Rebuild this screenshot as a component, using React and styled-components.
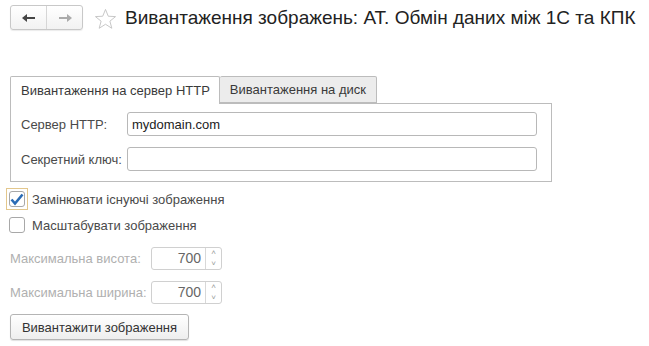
import React from 'react'
import styled, { createGlobalStyle } from 'styled-components'

const GlobalStyle = createGlobalStyle`
  body {
    margin: 0;
    background: #fff;
    font-family: Arial, "Liberation Sans", sans-serif;
  }
`

function App() {
  return (
    <Page>
      <GlobalStyle />
      <Header>
        <NavGroup>
          <NavButton>
            <svg width="14" height="10" viewBox="0 0 14 10">
              <path d="M0 5 L5 1 L5 4 L13 4 L13 6 L5 6 L5 9 Z" fill="#444" />
            </svg>
          </NavButton>
          <NavButton>
            <svg width="14" height="10" viewBox="0 0 14 10">
              <path d="M14 5 L9 1 L9 4 L1 4 L1 6 L9 6 L9 9 Z" fill="#aaa" />
            </svg>
          </NavButton>
        </NavGroup>
        <Star>
          <svg width="23" height="22" viewBox="0 0 24 23">
            <path
              d="M12 1.5 L14.9 8.6 L22.5 9 L16.6 13.8 L18.6 21.2 L12 17 L5.4 21.2 L7.4 13.8 L1.5 9 L9.1 8.6 Z"
              fill="none"
              stroke="#c4c4c4"
              strokeWidth="1"
              strokeLinejoin="round"
            />
          </svg>
        </Star>
        <Title>Вивантаження зображень: АТ. Обмін даних між 1С та КПК</Title>
      </Header>

      <Tabs>
        <TabBar>
          <Tab active>Вивантаження на сервер HTTP</Tab>
          <Tab>Вивантаження на диск</Tab>
        </TabBar>
        <TabPanel>
          <FieldRow>
            <FieldLabel>Сервер HTTP:</FieldLabel>
            <TextInput defaultValue="mydomain.com" />
          </FieldRow>
          <FieldRow>
            <FieldLabel>Секретний ключ:</FieldLabel>
            <TextInput defaultValue="" />
          </FieldRow>
        </TabPanel>
      </Tabs>

      <Options>
        <CheckRow>
          <CheckFrame focused>
            <CheckBox>
              <svg width="14" height="13" viewBox="0 0 14 13">
                <path d="M1.5 6.5 L5 10.5 L12.5 1.5" fill="none" stroke="#2b6cb5" strokeWidth="2.6" />
              </svg>
            </CheckBox>
          </CheckFrame>
          <CheckLabel>Замінювати існуючі зображення</CheckLabel>
        </CheckRow>
        <CheckRow>
          <CheckFrame>
            <CheckBox />
          </CheckFrame>
          <CheckLabel>Масштабувати зображення</CheckLabel>
        </CheckRow>

        <SpinRow>
          <SpinLabel>Максимальна висота:</SpinLabel>
          <SpinBox>
            <SpinValue>700</SpinValue>
            <SpinArrows>
              <Arrow>˄</Arrow>
              <Arrow>˅</Arrow>
            </SpinArrows>
          </SpinBox>
        </SpinRow>
        <SpinRow>
          <SpinLabel>Максимальна ширина:</SpinLabel>
          <SpinBox>
            <SpinValue>700</SpinValue>
            <SpinArrows>
              <Arrow>˄</Arrow>
              <Arrow>˅</Arrow>
            </SpinArrows>
          </SpinBox>
        </SpinRow>

        <ActionButton>Вивантажити зображення</ActionButton>
      </Options>
    </Page>
  )
}

export default App

const Page = styled.div`
  width: 649px;
  height: 346px;
  padding: 5px 10px 0 10px;
  box-sizing: border-box;
  color: #444;
`

const Header = styled.div`
  display: flex;
  align-items: center;
  height: 25px;
`

const NavGroup = styled.div`
  display: flex;
  width: 73px;
  height: 25px;
  box-sizing: border-box;
  border: 1px solid #c8c8c8;
  border-radius: 3px;
  background: linear-gradient(#fff, #f2f2f2);
  box-shadow: 0 1px 1px rgba(0, 0, 0, 0.08);
`

const NavButton = styled.div`
  flex: 1;
  display: flex;
  align-items: center;
  justify-content: center;

  & + & {
    border-left: 1px solid #d6d6d6;
  }
`

const Star = styled.div`
  display: flex;
  margin-left: 11px;
  margin-top: 2px;
`

const Title = styled.div`
  margin-left: 8px;
  font-size: 19px;
  color: #222;
  white-space: nowrap;
`

const Tabs = styled.div`
  margin-top: 46px;
  width: 542px;
`

const TabBar = styled.div`
  display: flex;
  height: 27px;
`

const Tab = styled.div`
  box-sizing: border-box;
  height: ${(p) => (p.active ? '28px' : '27px')};
  padding: 0 ${(p) => (p.active ? '9px' : '10px')} 0 10px;
  display: flex;
  align-items: center;
  font-size: 13px;
  color: #3a3a3a;
  border: 1px solid #bcbcbc;
  border-bottom: ${(p) => (p.active ? 'none' : '1px solid #bcbcbc')};
  border-left: ${(p) => (p.active ? '1px solid #bcbcbc' : 'none')};
  border-radius: 2px 2px 0 0;
  background: ${(p) => (p.active ? '#fff' : '#ececec')};
  position: relative;
  z-index: 1;
`

const TabPanel = styled.div`
  box-sizing: border-box;
  border: 1px solid #bcbcbc;
  height: 79px;
  padding: 8px 14px 0 10px;
  display: flex;
  flex-direction: column;
  gap: 11px;
`

const FieldRow = styled.div`
  display: flex;
  align-items: center;
`

const FieldLabel = styled.div`
  width: 106px;
  font-size: 13px;
  color: #4a4a4a;
`

const TextInput = styled.input`
  flex: 1;
  height: 24px;
  box-sizing: border-box;
  border: 1px solid #b8b8b8;
  border-radius: 3px;
  padding: 0 4px;
  font-family: Arial, "Liberation Sans", sans-serif;
  font-size: 13px;
  color: #222;
  outline: none;
`

const Options = styled.div`
  display: flex;
  flex-direction: column;
  margin-top: 6px;
`

const CheckRow = styled.div`
  display: flex;
  align-items: center;
  height: 22px;
  margin-bottom: 4px;
`

const CheckFrame = styled.div`
  width: 22px;
  height: 22px;
  box-sizing: border-box;
  margin-left: -4px;
  border: 1px solid ${(p) => (p.focused ? '#e3c78c' : 'transparent')};
  display: flex;
  align-items: center;
  justify-content: center;
`

const CheckBox = styled.div`
  width: 16px;
  height: 16px;
  box-sizing: border-box;
  border: 1px solid #a8a8a8;
  border-radius: 3px;
  background: #fff;
  display: flex;
  align-items: center;
  justify-content: center;
`

const CheckLabel = styled.div`
  margin-left: 4px;
  font-size: 13px;
  color: #4a4a4a;
`

const SpinRow = styled.div`
  display: flex;
  align-items: center;
  margin-top: 7px;
  margin-bottom: 4px;
`

const SpinLabel = styled.div`
  width: 141px;
  font-size: 13px;
  color: #b0b0b0;
`

const SpinBox = styled.div`
  display: flex;
  width: 71px;
  height: 23px;
  box-sizing: border-box;
  border: 1px solid #d0d0d0;
  border-radius: 3px;
`

const SpinValue = styled.div`
  flex: 1;
  text-align: right;
  padding-right: 4px;
  font-size: 14px;
  line-height: 21px;
  color: #666;
`

const SpinArrows = styled.div`
  width: 15px;
  border-left: 1px solid #d8d8d8;
  display: flex;
  flex-direction: column;
`

const Arrow = styled.div`
  flex: 1;
  font-size: 8px;
  line-height: 10px;
  text-align: center;
  color: #999;
`

const ActionButton = styled.button`
  align-self: flex-start;
  margin-top: 6px;
  width: 179px;
  height: 26px;
  box-sizing: border-box;
  border: 1px solid #b4b4b4;
  border-radius: 3px;
  background: linear-gradient(#fff, #eee);
  box-shadow: 0 1px 1px rgba(0, 0, 0, 0.12);
  font-family: Arial, "Liberation Sans", sans-serif;
  font-size: 13px;
  color: #333;
  padding: 0;
`
